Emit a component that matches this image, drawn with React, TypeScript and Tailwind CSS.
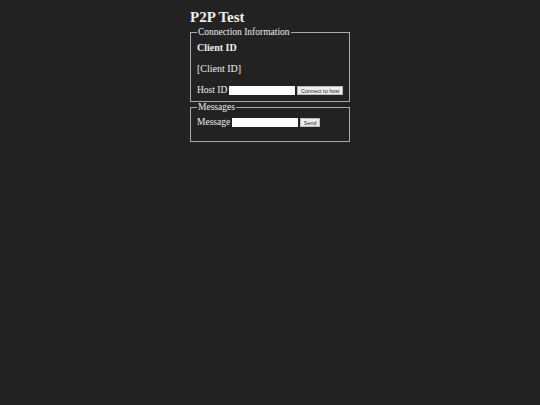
export default function App() {
  return (
    <div className="min-h-[405px] bg-[#222222] text-[#eeeeee] font-['Liberation_Serif',serif]">
      <div className="mx-auto w-[160px] pt-[9px]">
        <h1 className="text-[15px] font-bold leading-[16px] mb-[2px]">P2P Test</h1>
        <fieldset className="border border-[#aaaaaa] px-[6px] pb-[5px] min-w-0">
          <legend className="text-[9.5px] leading-[11px] px-[1px]">Connection Information</legend>
          <div className="text-[10px] font-bold leading-[12px] mt-[4px]">Client ID</div>
          <div className="text-[10px] leading-[12px] mt-[9px]">[Client ID]</div>
          <div className="flex items-center gap-[2px] mt-[9px] text-[9.5px] leading-[12px] whitespace-nowrap">
            <span className="shrink-0">Host ID</span>
            <input className="shrink-0 w-[66px] h-[9px] bg-white border-0 outline-none" />
            <button className="shrink-0 h-[9px] w-[46px] bg-[#eeeeee] text-[#222] text-[5.5px] leading-[9px] font-['Liberation_Sans',sans-serif] border border-[#bbb]">
              Connect to host
            </button>
          </div>
        </fieldset>
        <fieldset className="border border-[#aaaaaa] px-[6px] pb-[13px] mt-0 min-w-0">
          <legend className="text-[9.5px] leading-[11px] px-[1px]">Messages</legend>
          <div className="flex items-center gap-[2px] mt-[3px] text-[9.5px] leading-[12px] whitespace-nowrap">
            <span className="shrink-0">Message</span>
            <input className="shrink-0 w-[66px] h-[9px] bg-white border-0 outline-none" />
            <button className="shrink-0 h-[9px] w-[20px] bg-[#eeeeee] text-[#222] text-[5.5px] leading-[9px] font-['Liberation_Sans',sans-serif] border border-[#bbb]">
              Send
            </button>
          </div>
        </fieldset>
      </div>
    </div>
  );
}
